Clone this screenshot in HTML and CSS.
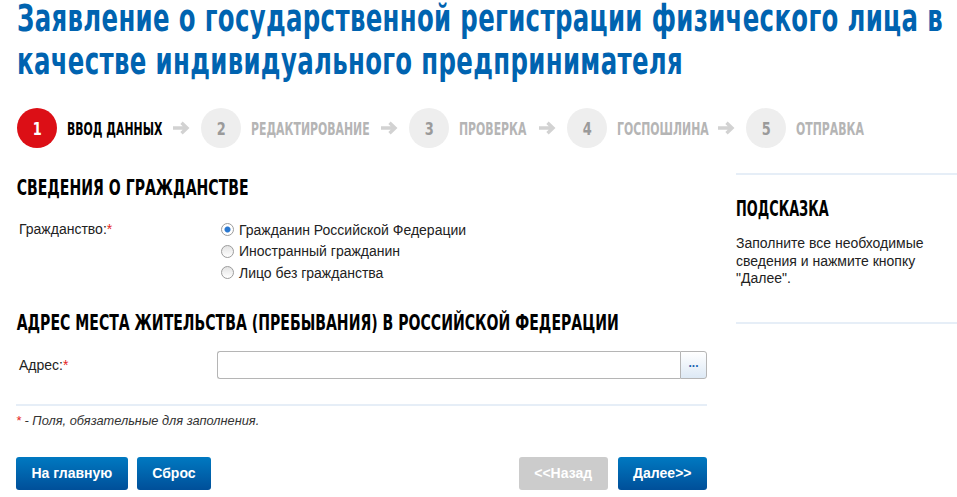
FILE: index.html
```html
<!DOCTYPE html>
<html lang="ru">
<head>
  <meta charset="UTF-8">
  <title>Заявление о государственной регистрации</title>
  <link rel="stylesheet" href="styles.css">
</head>
<body>
  <div class="page">
    <div class="title-wrap">
      <h1 class="title">Заявление о государственной регистрации физического лица в качестве индивидуального предпринимателя</h1>
    </div>

    <!-- Шаги -->
    <div class="steps">
      <div class="step active s1"><span class="num"><b>1</b></span><span class="name"><b>Ввод данных</b></span></div>
      <svg class="arrow" viewBox="0 0 18 14"><path d="M1 7h14M9.5 1.8l5.5 5.2-5.5 5.2"/></svg>
      <div class="step s2"><span class="num"><b>2</b></span><span class="name"><b>Редактирование</b></span></div>
      <svg class="arrow" viewBox="0 0 18 14"><path d="M1 7h14M9.5 1.8l5.5 5.2-5.5 5.2"/></svg>
      <div class="step s3"><span class="num"><b>3</b></span><span class="name"><b>Проверка</b></span></div>
      <svg class="arrow" viewBox="0 0 18 14"><path d="M1 7h14M9.5 1.8l5.5 5.2-5.5 5.2"/></svg>
      <div class="step s4"><span class="num"><b>4</b></span><span class="name"><b>Госпошлина</b></span></div>
      <svg class="arrow" viewBox="0 0 18 14"><path d="M1 7h14M9.5 1.8l5.5 5.2-5.5 5.2"/></svg>
      <div class="step s5"><span class="num"><b>5</b></span><span class="name"><b>Отправка</b></span></div>
    </div>

    <div class="layout">
      <div class="main">
        <h2>Сведения о гражданстве</h2>
        <div class="row">
          <div class="label">Гражданство:<span class="req">*</span></div>
          <div class="radios">
            <label><input type="radio" name="cit" checked> Гражданин Российской Федерации</label>
            <label><input type="radio" name="cit"> Иностранный гражданин</label>
            <label><input type="radio" name="cit"> Лицо без гражданства</label>
          </div>
        </div>

        <h2 class="second">Адрес места жительства (пребывания) в Российской Федерации</h2>
        <div class="row addr-row">
          <div class="label">Адрес:<span class="req">*</span></div>
          <div class="address">
            <input type="text">
            <button type="button" class="dots">...</button>
          </div>
        </div>

        <div class="note"><span class="req">*</span> - Поля, обязательные для заполнения.</div>

        <div class="buttons">
          <div class="left">
            <button class="btn">На главную</button>
            <button class="btn">Сброс</button>
          </div>
          <div class="right">
            <button class="btn disabled">&lt;&lt;Назад</button>
            <button class="btn">Далее&gt;&gt;</button>
          </div>
        </div>
      </div>

      <div class="hint">
        <h3>Подсказка</h3>
        <p>Заполните все необходимые сведения и нажмите кнопку "Далее".</p>
      </div>
    </div>
  </div>
</body>
</html>
```

FILE: styles.css
```css
body {
  margin: 0;
  font-family: "Liberation Sans", Arial, sans-serif;
  font-size: 14px;
  color: #222;
  background: #fff;
}

.page {
  padding: 0 0 0 16px;
}

/* Узкий шрифт заголовков: сжимаем DejaVu по ширине */
.title,
h2,
h3,
.step .name b,
.step .num b {
  font-family: "DejaVu Sans", sans-serif;
  font-weight: bold;
}

.title-wrap {
  height: 86px;
  margin-top: -3px;
  padding-left: 1px;
}

.title {
  margin: 0;
  width: 1420px;
  font-size: 37px;
  line-height: 43px;
  letter-spacing: 0.5px;
  color: #0063b0;
  transform: scaleX(0.66);
  transform-origin: left top;
}

/* Шаги */
.steps {
  display: flex;
  align-items: center;
  margin-top: 25px;
  padding-left: 1px;
  height: 40px;
}

.step {
  display: flex;
  align-items: center;
}

.step .num {
  width: 40px;
  height: 40px;
  border-radius: 50%;
  background: #eeeeee;
  color: #9a9a9a;
  display: flex;
  align-items: center;
  justify-content: center;
}

.step .num b {
  font-size: 18px;
  transform: scaleX(0.72);
}

.step .name {
  margin-left: 10px;
  white-space: nowrap;
}

.step .name b {
  display: inline-block;
  font-size: 18px;
  text-transform: uppercase;
  color: #b5b5b5;
  transform: scaleX(0.605);
  transform-origin: left center;
}

.s1 .name { width: 94px; }
.s2 .name { width: 118px; }
.s3 .name { width: 68px; }
.s4 .name { width: 89px; }
.s5 .name { width: 65px; }

.step.active .num {
  background: #dc0f16;
  color: #fff;
}

.step.active .name b {
  color: #000;
}

.arrow {
  width: 18px;
  height: 14px;
  margin: 0 11px;
  fill: none;
  stroke: #d2d2d2;
  stroke-width: 3.4;
}

.layout {
  display: flex;
  margin-top: 27px;
}

.main {
  width: 691px;
  flex-shrink: 0;
}

h2 {
  margin: 0;
  font-size: 22px;
  line-height: 26px;
  color: #000;
  text-transform: uppercase;
  white-space: nowrap;
  transform: scaleX(0.64);
  transform-origin: left top;
  padding-left: 1px;
}

h2.second {
  margin-top: 26px;
}

.row {
  display: flex;
  margin-top: 18px;
}

.addr-row {
  margin-top: 15px;
}

.label {
  box-sizing: border-box;
  width: 201px;
  padding-left: 3px;
  line-height: 21px;
}

.addr-row .label {
  line-height: 28px;
}

.req {
  color: #e52424;
}

.radios {
  display: flex;
  flex-direction: column;
}

.radios label {
  display: flex;
  align-items: center;
  height: 21.5px;
}

.radios input {
  appearance: none;
  -webkit-appearance: none;
  width: 13px;
  height: 13px;
  margin: 0 5px 0 4px;
  border: 1px solid #9c9c9c;
  border-radius: 50%;
  background: linear-gradient(#e3e3e3, #fff);
}

.radios input:checked {
  background: radial-gradient(circle, #2a78d0 0, #2a78d0 2.5px, #fff 3.5px);
}

.address {
  display: flex;
  flex: 1;
  height: 28px;
}

.address input {
  flex: 1;
  box-sizing: border-box;
  height: 28px;
  border: 1px solid #b5b5b5;
  border-right: none;
  border-radius: 3px 0 0 3px;
  margin: 0;
}

.dots {
  width: 27px;
  height: 28px;
  box-sizing: border-box;
  border: 1px solid #b5b5b5;
  border-radius: 0 3px 3px 0;
  background: linear-gradient(#ffffff, #dde9f5);
  color: #1a62b0;
  font-weight: bold;
  font-size: 12px;
  padding: 0 0 4px;
  margin: 0;
}

.note {
  margin-top: 25px;
  border-top: 2px solid #e6eef7;
  padding-top: 7px;
  font-size: 12.8px;
  font-style: italic;
  color: #333;
}

.buttons {
  display: flex;
  justify-content: space-between;
  margin-top: 29px;
}

.buttons .left {
  display: flex;
  gap: 9px;
}

.buttons .right {
  display: flex;
  gap: 10px;
}

.btn {
  height: 33px;
  padding: 0 15.5px;
  border: none;
  border-radius: 3px;
  background: linear-gradient(#0079c1, #004f99);
  color: #fff;
  font-family: "Liberation Sans", Arial, sans-serif;
  font-size: 14px;
  font-weight: bold;
  cursor: pointer;
}

.btn.disabled {
  background: #cccccc;
}

/* Подсказка */
.hint {
  flex: 1;
  margin-left: 29px;
  margin-top: -2px;
  padding-bottom: 34px;
  border-top: 2px solid #e6eef7;
  border-bottom: 2px solid #e6eef7;
  align-self: flex-start;
}

.hint h3 {
  margin: 22px 0 0;
  font-size: 21px;
  line-height: 24px;
  text-transform: uppercase;
  color: #000;
  white-space: nowrap;
  transform: scaleX(0.613);
  transform-origin: left top;
}

.hint p {
  margin: 14px 0 0;
  line-height: 17.5px;
  width: 215px;
}
```
